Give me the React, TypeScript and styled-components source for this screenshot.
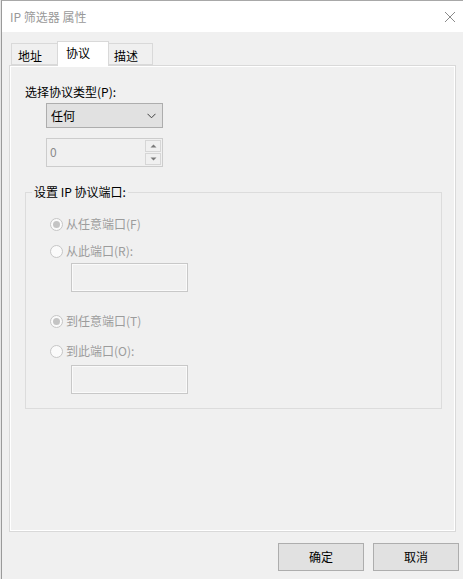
import styled, { createGlobalStyle } from "styled-components";

const GlobalStyle = createGlobalStyle`
  html, body {
    margin: 0;
    padding: 0;
    background: #ffffff;
  }
  body {
    font-family: "Noto Sans CJK SC", "Microsoft YaHei", sans-serif;
    font-size: 12px;
    color: #000;
  }
`;

export default function App() {
  return (
    <>
      <GlobalStyle />
      <Screen>
        <Behind />
        <Window>
          <TitleBar>
            <Title>IP 筛选器 属性</Title>
            <CloseIcon width="12" height="12" viewBox="0 0 12 12">
              <path d="M1 1 L11 11 M11 1 L1 11" stroke="#8a8a8a" strokeWidth="1" />
            </CloseIcon>
          </TitleBar>
          <Body>
            <TabStrip>
              <Tab $width={47} $pad={6}>地址</Tab>
              <Tab $width={52} $pad={8} $active>协议</Tab>
              <Tab $width={45} $pad={5}>描述</Tab>
            </TabStrip>
            <Panel>
              <FieldLabel>选择协议类型(P):</FieldLabel>
              <Combo>
                <span>任何</span>
                <svg width="9" height="6" viewBox="0 0 9 6">
                  <path d="M0.5 0.8 L4.5 4.8 L8.5 0.8" fill="none" stroke="#404040" strokeWidth="1" />
                </svg>
              </Combo>
              <Spin>
                <SpinValue>0</SpinValue>
                <SpinButtons>
                  <SpinButton>
                    <svg width="7" height="4" viewBox="0 0 7 4">
                      <path d="M0.5 3.5 L3.5 0.5 L6.5 3.5 Z" fill="#7a7a7a" />
                    </svg>
                  </SpinButton>
                  <SpinButton>
                    <svg width="7" height="4" viewBox="0 0 7 4">
                      <path d="M0.5 0.5 L3.5 3.5 L6.5 0.5 Z" fill="#7a7a7a" />
                    </svg>
                  </SpinButton>
                </SpinButtons>
              </Spin>
              <Group>
                <Legend>设置 IP 协议端口:</Legend>
                <GroupBody>
                  <RadioRow $top={16}>
                    <Radio $checked />
                    <RadioText>从任意端口(F)</RadioText>
                  </RadioRow>
                  <RadioRow $top={11}>
                    <Radio />
                    <RadioText>从此端口(R):</RadioText>
                  </RadioRow>
                  <PortBox $top={4} />
                  <RadioRow $top={21}>
                    <Radio $checked />
                    <RadioText>到任意端口(T)</RadioText>
                  </RadioRow>
                  <RadioRow $top={14}>
                    <Radio />
                    <RadioText>到此端口(O):</RadioText>
                  </RadioRow>
                  <PortBox $top={6} />
                </GroupBody>
              </Group>
            </Panel>
            <ButtonRow>
              <Button>确定</Button>
              <Button>取消</Button>
            </ButtonRow>
          </Body>
        </Window>
      </Screen>
    </>
  );
}

const Screen = styled.div`
  display: flex;
  width: 463px;
  height: 579px;
  overflow: hidden;
`;

const Behind = styled.div`
  width: 1px;
  background: #e6e6e6;
`;

const Window = styled.div`
  flex: 1;
  display: flex;
  flex-direction: column;
  border-top: 1px solid #a8a8a8;
  border-left: 1px solid #9a9a9a;
  background: #f0f0f0;
`;

const TitleBar = styled.div`
  height: 31px;
  flex-shrink: 0;
  background: #ffffff;
  display: flex;
  align-items: center;
  justify-content: space-between;
  padding: 0 7px 0 8px;
`;

const Title = styled.div`
  color: #999999;
  font-size: 12px;
  line-height: 16px;
`;

const CloseIcon = styled.svg`
  display: block;
`;

const Body = styled.div`
  flex: 1;
  display: flex;
  flex-direction: column;
  padding: 9px 0 8px 7px;
`;

const TabStrip = styled.div`
  display: flex;
  align-items: flex-end;
  height: 24px;
  padding-left: 2px;
`;

const Tab = styled.div<{ $width: number; $pad: number; $active?: boolean }>`
  box-sizing: border-box;
  width: ${(p) => p.$width}px;
  height: ${(p) => (p.$active ? 25 : 22)}px;
  margin-left: -1px;
  margin-bottom: ${(p) => (p.$active ? -1 : 0)}px;
  padding-left: ${(p) => p.$pad}px;
  padding-top: ${(p) => (p.$active ? 3 : 4)}px;
  border: 1px solid #d9d9d9;
  border-bottom: ${(p) => (p.$active ? "none" : "1px solid #d9d9d9")};
  background: ${(p) => (p.$active ? "#ffffff" : "#f0f0f0")};
  line-height: 16px;
  position: relative;
  z-index: ${(p) => (p.$active ? 2 : 0)};

  &:first-child {
    margin-left: 0;
  }
`;

const Panel = styled.div`
  flex: 1;
  margin-right: 7px;
  border: 1px solid #d9d9d9;
  box-shadow: inset 1px 1px 0 #ffffff, inset -1px -1px 0 #ffffff;
  padding: 18px 13px 0 15px;
  display: flex;
  flex-direction: column;
  align-items: flex-start;
  position: relative;
  z-index: 1;
`;

const FieldLabel = styled.div`
  line-height: 16px;
`;

const Combo = styled.div`
  box-sizing: border-box;
  margin: 3px 0 0 21px;
  width: 117px;
  height: 25px;
  background: #e1e1e1;
  border: 1px solid #adadad;
  display: flex;
  align-items: center;
  justify-content: space-between;
  padding: 0 6px 0 4px;
  line-height: 16px;
`;

const Spin = styled.div`
  box-sizing: border-box;
  margin: 10px 0 0 21px;
  width: 117px;
  height: 29px;
  border: 1px solid #cccccc;
  background: #f0f0f0;
  display: flex;
  justify-content: space-between;
`;

const SpinValue = styled.div`
  color: #8a8a8a;
  padding: 5px 0 0 3px;
  line-height: 16px;
`;

const SpinButtons = styled.div`
  display: flex;
  flex-direction: column;
  width: 16px;
  padding: 1px 1px 1px 0;
  gap: 1px;
`;

const SpinButton = styled.div`
  flex: 1;
  border: 1px solid #d6d6d6;
  background: #f0f0f0;
  display: flex;
  align-items: center;
  justify-content: center;
`;

const Group = styled.fieldset`
  align-self: stretch;
  margin: 17px 0 0 0;
  padding: 0 0 14px 6px;
  border: 1px solid #dcdcdc;
  min-width: 0;
`;

const Legend = styled.legend`
  margin-left: 0;
  padding: 0 2px;
  line-height: 16px;
`;

const GroupBody = styled.div`
  display: flex;
  flex-direction: column;
  align-items: flex-start;
  padding-left: 18px;
`;

const RadioRow = styled.div<{ $top: number }>`
  display: flex;
  align-items: center;
  gap: 3px;
  margin-top: ${(p) => p.$top}px;
  height: 16px;
`;

const Radio = styled.span<{ $checked?: boolean }>`
  box-sizing: border-box;
  width: 13px;
  height: 13px;
  border-radius: 50%;
  border: 1px solid #c6c6c6;
  background: #fafafa;
  display: flex;
  align-items: center;
  justify-content: center;

  &::after {
    content: "";
    width: 7px;
    height: 7px;
    border-radius: 50%;
    background: ${(p) => (p.$checked ? "#c4c4c4" : "transparent")};
  }
`;

const RadioText = styled.span`
  color: #9c9c9c;
  line-height: 16px;
`;

const PortBox = styled.div<{ $top: number }>`
  box-sizing: border-box;
  margin: ${(p) => p.$top}px 0 0 21px;
  width: 117px;
  height: 29px;
  border: 1px solid #c8c8c8;
  box-shadow: inset 0 0 0 1px #fafafa;
  background: #f0f0f0;
`;

const ButtonRow = styled.div`
  display: flex;
  justify-content: flex-end;
  gap: 9px;
  margin-top: 11px;
  padding-right: 4px;
`;

const Button = styled.div`
  box-sizing: border-box;
  width: 86px;
  height: 28px;
  background: #e1e1e1;
  border: 1px solid #adadad;
  display: flex;
  align-items: center;
  justify-content: center;
  line-height: 16px;
`;
